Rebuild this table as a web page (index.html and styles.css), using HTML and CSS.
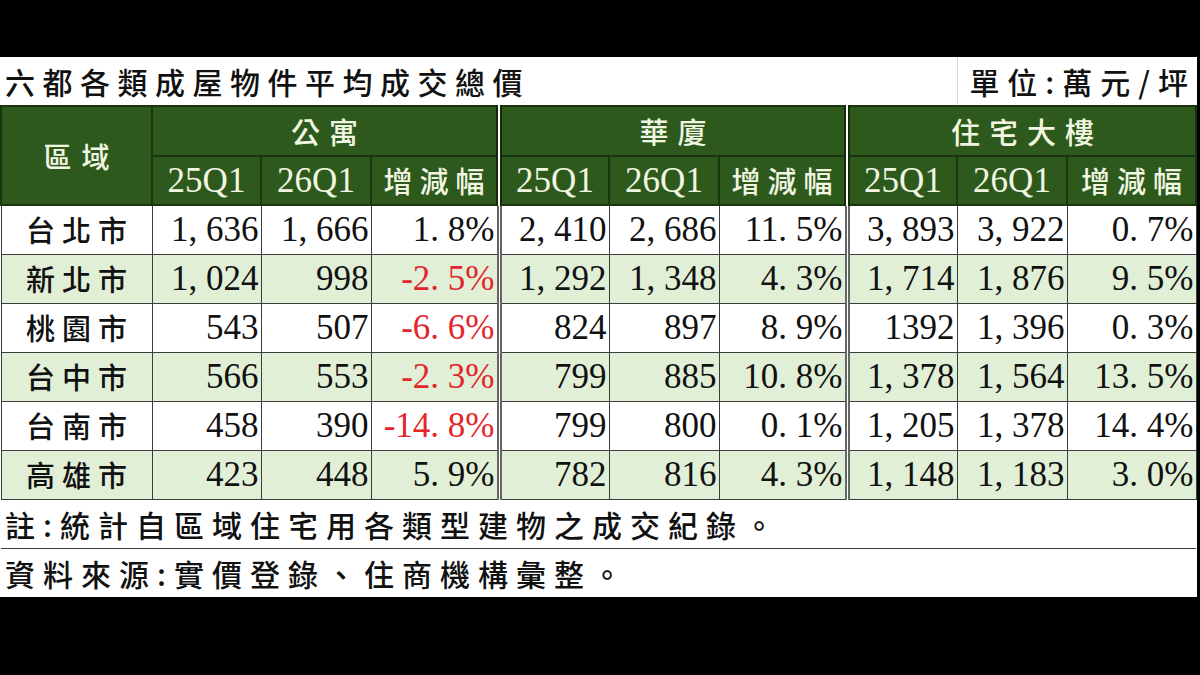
FILE: index.html
```html
<!DOCTYPE html>
<html lang="zh-Hant">
<head>
<meta charset="utf-8">
<title>六都各類成屋物件平均成交總價</title>
<link rel="stylesheet" href="styles.css">
</head>
<body>
<div class="sheet">
<table class="grid">
<colgroup>
<col class="c-area"><col class="c-a"><col class="c-b"><col class="c-c">
<col class="c-a2"><col class="c-b"><col class="c-c">
<col class="c-a2"><col class="c-b"><col class="c-c2">
</colgroup>
<tr class="r-title">
<td class="title" colspan="8">六都各類成屋物件平均成交總價</td>
<td class="unit" colspan="2">單位:萬元/坪</td>
</tr>
<tr class="r-h1">
<th class="h-area" rowspan="2">區域</th>
<th class="h-grp" colspan="3">公寓</th>
<th class="h-grp g" colspan="3">華廈</th>
<th class="h-grp g" colspan="3">住宅大樓</th>
</tr>
<tr class="r-h2">
<th class="h-num">25Q1</th><th class="h-num">26Q1</th><th class="h-cn">增減幅</th>
<th class="h-num g">25Q1</th><th class="h-num">26Q1</th><th class="h-cn">增減幅</th>
<th class="h-num g">25Q1</th><th class="h-num">26Q1</th><th class="h-cn">增減幅</th>
</tr>
<tr class="row">
<td class="area">台北市</td>
<td class="n">1<span class="p">,</span>636</td><td class="n">1<span class="p">,</span>666</td><td class="n">1<span class="p">.</span>8%</td>
<td class="n g">2<span class="p">,</span>410</td><td class="n">2<span class="p">,</span>686</td><td class="n">11<span class="p">.</span>5%</td>
<td class="n g">3<span class="p">,</span>893</td><td class="n">3<span class="p">,</span>922</td><td class="n">0<span class="p">.</span>7%</td>
</tr>
<tr class="row alt">
<td class="area">新北市</td>
<td class="n">1<span class="p">,</span>024</td><td class="n">998</td><td class="n neg">-2<span class="p">.</span>5%</td>
<td class="n g">1<span class="p">,</span>292</td><td class="n">1<span class="p">,</span>348</td><td class="n">4<span class="p">.</span>3%</td>
<td class="n g">1<span class="p">,</span>714</td><td class="n">1<span class="p">,</span>876</td><td class="n">9<span class="p">.</span>5%</td>
</tr>
<tr class="row">
<td class="area">桃園市</td>
<td class="n">543</td><td class="n">507</td><td class="n neg">-6<span class="p">.</span>6%</td>
<td class="n g">824</td><td class="n">897</td><td class="n">8<span class="p">.</span>9%</td>
<td class="n g">1392</td><td class="n">1<span class="p">,</span>396</td><td class="n">0<span class="p">.</span>3%</td>
</tr>
<tr class="row alt">
<td class="area">台中市</td>
<td class="n">566</td><td class="n">553</td><td class="n neg">-2<span class="p">.</span>3%</td>
<td class="n g">799</td><td class="n">885</td><td class="n">10<span class="p">.</span>8%</td>
<td class="n g">1<span class="p">,</span>378</td><td class="n">1<span class="p">,</span>564</td><td class="n">13<span class="p">.</span>5%</td>
</tr>
<tr class="row">
<td class="area">台南市</td>
<td class="n">458</td><td class="n">390</td><td class="n neg">-14<span class="p">.</span>8%</td>
<td class="n g">799</td><td class="n">800</td><td class="n">0<span class="p">.</span>1%</td>
<td class="n g">1<span class="p">,</span>205</td><td class="n">1<span class="p">,</span>378</td><td class="n">14<span class="p">.</span>4%</td>
</tr>
<tr class="row alt">
<td class="area">高雄市</td>
<td class="n">423</td><td class="n">448</td><td class="n">5<span class="p">.</span>9%</td>
<td class="n g">782</td><td class="n">816</td><td class="n">4<span class="p">.</span>3%</td>
<td class="n g">1<span class="p">,</span>148</td><td class="n">1<span class="p">,</span>183</td><td class="n">3<span class="p">.</span>0%</td>
</tr>
<tr class="r-note">
<td class="note" colspan="10">註:統計自區域住宅用各類型建物之成交紀錄。</td>
</tr>
<tr class="r-note last">
<td class="note" colspan="10">資料來源:實價登錄、住商機構彙整。</td>
</tr>
</table>
</div>
</body>
</html>
```
FILE: styles.css
```css
html, body {
  margin: 0;
  padding: 0;
  background: #000;
}
body {
  width: 1200px;
  height: 675px;
  overflow: hidden;
}
.sheet {
  margin-top: 57px;
  width: 1197px;
  background: #fff;
}
.grid {
  border-collapse: collapse;
  table-layout: fixed;
  width: 1197px;
  font-family: "Noto Sans CJK TC", "Noto Sans CJK SC", sans-serif;
  font-weight: 500;
  color: #111;
}
.c-area { width: 151px; }
.c-a { width: 109px; }
.c-b { width: 110px; }
.c-c { width: 128px; }
.c-a2 { width: 110px; }
.c-c2 { width: 129px; }

td, th {
  padding: 0;
  overflow: hidden;
  white-space: nowrap;
}

/* title row */
.r-title { height: 49px; }
.title {
  font-size: 30px;
  letter-spacing: 7.5px;
  padding-left: 4px;
  text-align: left;
  vertical-align: middle;
  border-right: 1px solid #d6d6d6;
  line-height: 1;
}
.unit {
  font-size: 30px;
  letter-spacing: 8px;
  text-align: right;
  padding-right: 0;
  line-height: 1;
}

/* header */
.r-h1 { height: 50px; }
.r-h2 { height: 49px; }
th {
  background: #2d5a1c;
  color: #f1f6e2;
  font-weight: 500;
  border: 2px solid #1b3410;
  line-height: 1;
}
.h-area {
  font-size: 28px;
  letter-spacing: 10px;
  padding-left: 10px;
}
.h-grp {
  font-size: 29px;
  letter-spacing: 9px;
  padding-left: 9px;
}
.h-num {
  font-family: "Liberation Serif", serif;
  font-weight: 400;
  font-size: 35px;
}
.h-cn {
  font-size: 29px;
  letter-spacing: 7px;
  padding-left: 7px;
}
th.g {
  border-left: 6px double #142a0b;
}

/* body rows */
.row { height: 49px; }
.row td {
  border: 1px solid #3c3c3c;
  line-height: 1;
}
.row.alt td { background: #e1efd6; }
.area {
  text-align: center;
  font-size: 29px;
  letter-spacing: 7px;
  padding-left: 7px !important;
}
.n {
  font-family: "Liberation Serif", serif;
  font-weight: 400;
  font-size: 35px;
  text-align: right;
  padding-right: 2px !important;
  color: #111;
}
.p { margin-right: 0.25em; }
.neg { color: #e3262b; }
.row td.g {
  border-left: 5px double #666;
}

/* notes */
.r-note { height: 49px; }
.note {
  font-size: 30px;
  letter-spacing: 8px;
  padding-left: 4px;
  text-align: left;
  border-top: 1px solid #3c3c3c;
  border-bottom: 1px solid #3c3c3c;
  line-height: 1;
}
.r-note.last .note { border-bottom: none; }
```
